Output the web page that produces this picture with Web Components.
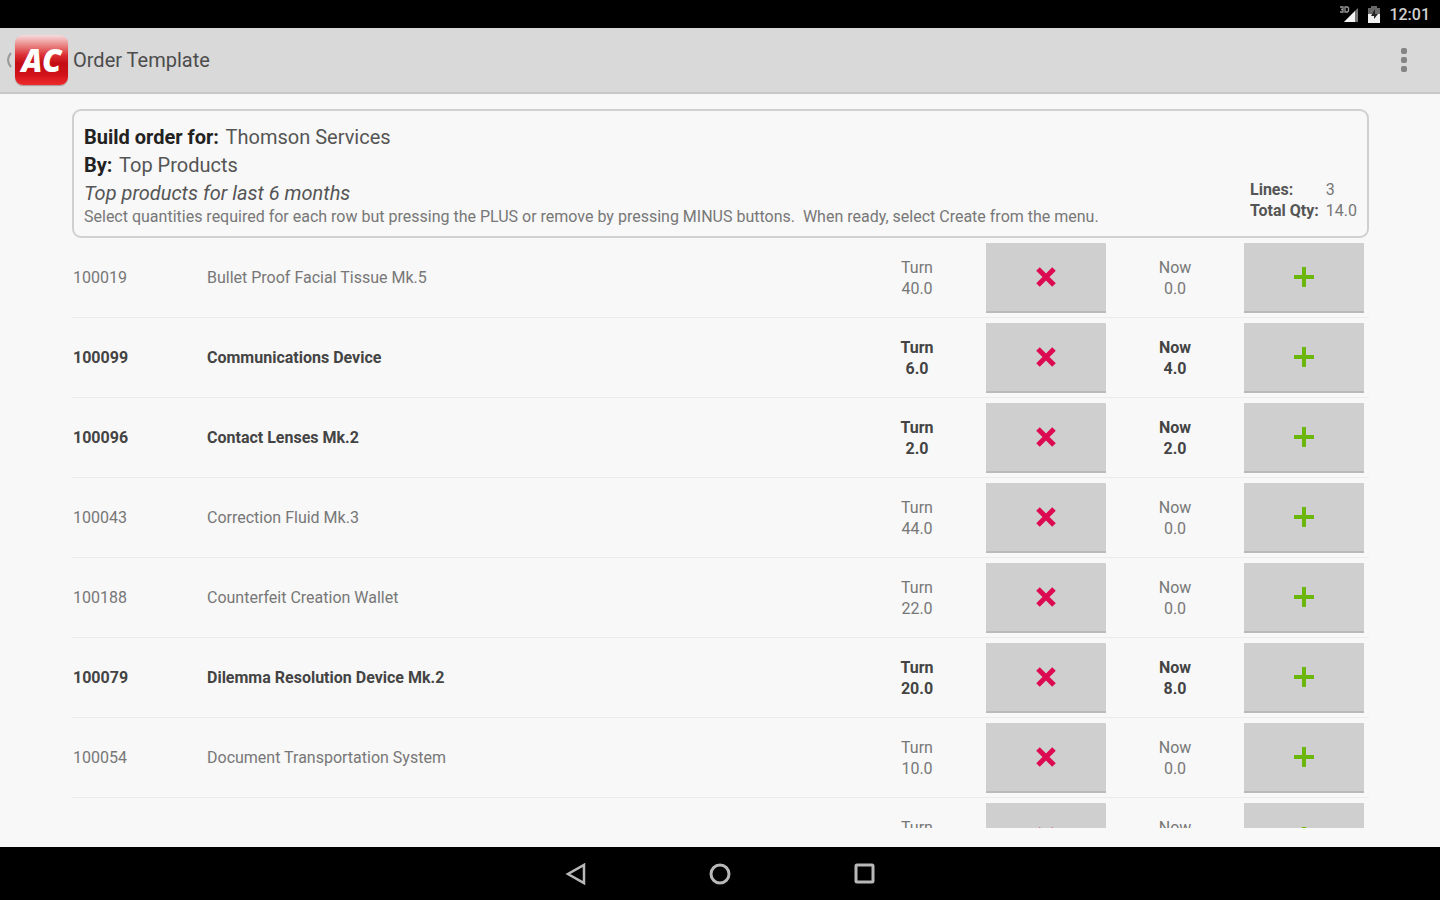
<!DOCTYPE html>
<html lang="en">
<head>
<meta charset="utf-8">
<meta name="viewport" content="width=device-width, initial-scale=1">
<title>Order Template</title>
<style>
    body {
        margin: 0;
        font-family: Roboto, "Liberation Sans", sans-serif;
        background: #f8f8f8;
        color: #555;
    }
</style>
</head>
<body>
<order-app></order-app>

<script>
//status bar ###
class StatusBar extends HTMLElement {
    constructor(){
        super();
        this.attachShadow({ mode: "open" });
        this.shadowRoot.innerHTML = `
            <style>
                :host {
                    display: flex;
                    align-items: center;
                    justify-content: flex-end;
                    height: 28px;
                    padding-right: 10px;
                    background: #000;
                    color: #d0d0d0;
                    font-size: 16px;
                    font-weight: 500;
                }
                svg { display: block; margin-right: 8px; }
            </style>
            <svg width="20" height="20" viewBox="0 0 20 20" aria-hidden="true">
                <path d="M19 4v14H5z" fill="#777"/>
                <path d="M16 7v11H5z" fill="#f4f4f4"/>
                <path d="M1 3h3v5H1M2 5.500h2M6 3h2.500l1 1v3l-1 1H6z" fill="none" stroke="#999" stroke-width="1.300"/>
            </svg>
            <svg width="14" height="20" viewBox="0 0 14 20" aria-hidden="true">
                <path d="M4 2h6v2h3v6H1V4h3z" fill="#686868"/>
                <path d="M1 10h12v9H1z" fill="#eee"/>
                <path d="M8 5l-4 7h3v3l4-5H8z" fill="#222"/>
            </svg>
            <slot></slot>
        `;
    }
}
customElements.define("status-bar", StatusBar);

//action bar ###
class ActionBar extends HTMLElement {
    constructor(){
        super();
        this.attachShadow({ mode: "open" });
        this.shadowRoot.innerHTML = `
            <style>
                :host {
                    display: flex;
                    align-items: center;
                    height: 64px;
                    padding: 0 20px 0 5px;
                    background: #d9d9d9;
                    border-bottom: 2px solid #c8c8c8;
                    color: #4c4c4c;
                }
                button {
                    display: flex;
                    align-items: center;
                    padding: 0;
                    border: 0;
                    background: none;
                    font: inherit;
                }
                .logo {
                    width: 53px;
                    height: 50px;
                    margin-left: 2px;
                    border-radius: 8px;
                    background: linear-gradient(#f6dcdc 0%, #e9807f 22%, #dc3034 40%, #c40c14 56%, #cf1118 78%, #ee2a2c 100%);
                    box-shadow: 0 1px 1px #a99;
                    color: #fff;
                    font: italic 900 31px/50px "Noto Sans", sans-serif;
                    text-align: center;
                }
                h1 {
                    flex: 1;
                    margin: 0 0 0 5px;
                    font-size: 20px;
                    font-weight: 400;
                    line-height: 24px;
                }
            </style>
            <button id="up-button" aria-label="Navigate up">
                <svg width="8" height="18" viewBox="0 0 8 18" aria-hidden="true">
                    <path d="M6 2Q0 9 6 16" fill="none" stroke="#999" stroke-width="2"/>
                </svg>
                <span class="logo">AC</span>
            </button>
            <h1><slot></slot></h1>
            <button id="menu-button" aria-label="More options">
                <svg width="32" height="32" viewBox="0 0 32 32" fill="#858585" aria-hidden="true">
                    <rect x="13" y="4" width="6" height="6" rx="2"/>
                    <rect x="13" y="13" width="6" height="6" rx="2"/>
                    <rect x="13" y="22" width="6" height="6" rx="2"/>
                </svg>
            </button>
        `;
    }
}
customElements.define("action-bar", ActionBar);

//order summary ###
class OrderSummary extends HTMLElement {
    constructor(){
        super();
        this.attachShadow({ mode: "open" });
        this.shadowRoot.innerHTML = `
            <style>
                :host {
                    display: flex;
                    align-items: flex-end;
                    justify-content: space-between;
                    padding: 12px 10px 9px;
                    border: 2px solid #d0d0d0;
                    border-radius: 9px;
                    font-size: 20px;
                    line-height: 28px;
                }
                p { margin: 0; }
                b { color: #222; font-weight: 700; margin-right: 2px; }
                .hint { font-size: 16px; line-height: 20px; color: #777; }
                dl {
                    display: grid;
                    grid-template-columns: auto auto;
                    column-gap: 7px;
                    margin: 0 0 6px;
                    font-size: 16px;
                    line-height: 21px;
                }
                dt { font-weight: 700; }
                dd { margin: 0; color: #777; }
            </style>
            <div>
                <p><b>Build order for:</b> <slot name="customer"></slot></p>
                <p><b>By:</b> <slot name="by"></slot></p>
                <p><em><slot name="period"></slot></em></p>
                <p class="hint"><slot></slot></p>
            </div>
            <dl>
                <dt>Lines:</dt><dd><slot name="lines"></slot></dd>
                <dt>Total Qty:</dt><dd><slot name="total"></slot></dd>
            </dl>
        `;
    }
}
customElements.define("order-summary", OrderSummary);

//quantity buttons ###
const quantityIcons = {
    minus: `<path d="M3 3l16 16M19 3L3 19" stroke="#dc0a50" stroke-width="5"/>`,
    plus: `<path d="M11 1v20M1 11h20" stroke="#6cb70c" stroke-width="4"/>`
};

class QuantityButton extends HTMLElement {
    constructor(){
        super();
        this.attachShadow({ mode: "open" });
        const kind = this.getAttribute("kind");
        this.shadowRoot.innerHTML = `
            <style>
                :host { display: block; }
                button {
                    display: flex;
                    align-items: center;
                    justify-content: center;
                    width: 100%;
                    height: 70px;
                    padding: 0;
                    border: 0;
                    border-bottom: 2px solid #bababa;
                    background: #cfcfcf;
                }
            </style>
            <button aria-label="${kind}">
                <svg width="22" height="22" viewBox="0 0 22 22" aria-hidden="true">${quantityIcons[kind]}</svg>
            </button>
        `;
    }
}
customElements.define("quantity-button", QuantityButton);

//order lines ###
const orderLines = [
    { code: "100019", name: "Bullet Proof Facial Tissue Mk.5", turn: "40.0", now: "0.0" },
    { code: "100099", name: "Communications Device", turn: "6.0", now: "4.0" },
    { code: "100096", name: "Contact Lenses Mk.2", turn: "2.0", now: "2.0" },
    { code: "100043", name: "Correction Fluid Mk.3", turn: "44.0", now: "0.0" },
    { code: "100188", name: "Counterfeit Creation Wallet", turn: "22.0", now: "0.0" },
    { code: "100079", name: "Dilemma Resolution Device Mk.2", turn: "20.0", now: "8.0" },
    { code: "100054", name: "Document Transportation System", turn: "10.0", now: "0.0" },
    { code: "", name: "", turn: "", now: "" }
];

class OrderLines extends HTMLElement {
    constructor(){
        super();
        this.attachShadow({ mode: "open" });
        this.shadowRoot.innerHTML = `
            <style>
                :host {
                    display: block;
                    overflow: hidden;
                    font-size: 16px;
                    line-height: 21px;
                    color: #777;
                }
                table {
                    width: 100%;
                    table-layout: fixed;
                    border-collapse: separate;
                    border-spacing: 0;
                }
                .code { width: 135px; }
                .quantity { width: 138px; }
                .button { width: 120px; }
                .end { width: 5px; }
                td {
                    box-sizing: border-box;
                    height: 80px;
                    padding: 0;
                    border-bottom: 1px solid #ebebeb;
                }
                td:first-child { padding-left: 1px; }
                .amount { text-align: center; }
                .amount span { display: block; min-height: 21px; }
                .ordered { color: #444; font-weight: 700; }
            </style>
            <table aria-label="Order lines">
                <colgroup>
                    <col class="code"><col>
                    <col class="quantity"><col class="button">
                    <col class="quantity"><col class="button"><col class="end">
                </colgroup>
                <tbody>${orderLines.map(line => this.getRowHTML(line)).join("")}</tbody>
            </table>
        `;
    }
    getRowHTML(line){
        return `
            <tr class="${Number(line.now) > 0 ? "ordered" : ""}">
                <td>${line.code}</td>
                <td>${line.name}</td>
                <td class="amount"><span>Turn</span><span>${line.turn}</span></td>
                <td><quantity-button kind="minus"></quantity-button></td>
                <td class="amount"><span>Now</span><span>${line.now}</span></td>
                <td><quantity-button kind="plus"></quantity-button></td>
                <td></td>
            </tr>
        `;
    }
}
customElements.define("order-lines", OrderLines);

//navigation bar ###
class NavigationBar extends HTMLElement {
    constructor(){
        super();
        this.attachShadow({ mode: "open" });
        this.shadowRoot.innerHTML = `
            <style>
                :host {
                    display: flex;
                    align-items: center;
                    justify-content: center;
                    gap: 112px;
                    height: 53px;
                    background: #000;
                }
                button { padding: 4px; border: 0; background: none; }
                svg {
                    display: block;
                    fill: none;
                    stroke: #b8b8b8;
                    stroke-width: 3;
                }
            </style>
            <button aria-label="Back">
                <svg width="24" height="24" viewBox="0 0 24 24"><path d="M20 3v18L4 12z" stroke-width="2.500"/></svg>
            </button>
            <button aria-label="Home">
                <svg width="24" height="24" viewBox="0 0 24 24"><circle cx="12" cy="12" r="9"/></svg>
            </button>
            <button aria-label="Recent apps">
                <svg width="24" height="24" viewBox="0 0 24 24"><rect x="4" y="3" width="17" height="17" rx="1"/></svg>
            </button>
        `;
    }
}
customElements.define("navigation-bar", NavigationBar);

//app ###
class OrderApp extends HTMLElement {
    constructor(){
        super();
        this.attachShadow({ mode: "open" });
        this.shadowRoot.innerHTML = `
            <style>
                :host {
                    display: flex;
                    flex-direction: column;
                    height: 100vh;
                }
                main {
                    display: flex;
                    flex-direction: column;
                    flex: 1;
                    min-height: 0;
                    padding: 15px 71px 19px 72px;
                }
                order-lines { flex: 1; min-height: 0; }
            </style>
            <status-bar>12:01</status-bar>
            <action-bar>Order Template</action-bar>
            <main>
                <order-summary>
                    <span slot="customer">Thomson Services</span>
                    <span slot="by">Top Products</span>
                    <span slot="period">Top products for last 6 months</span>
                    Select quantities required for each row but pressing the PLUS or remove by pressing MINUS buttons.&nbsp; When ready, select Create from the menu.
                    <span slot="lines">3</span>
                    <span slot="total">14.0</span>
                </order-summary>
                <order-lines></order-lines>
            </main>
            <navigation-bar></navigation-bar>
        `;
    }
}
customElements.define("order-app", OrderApp);
</script>
</body>
</html>
